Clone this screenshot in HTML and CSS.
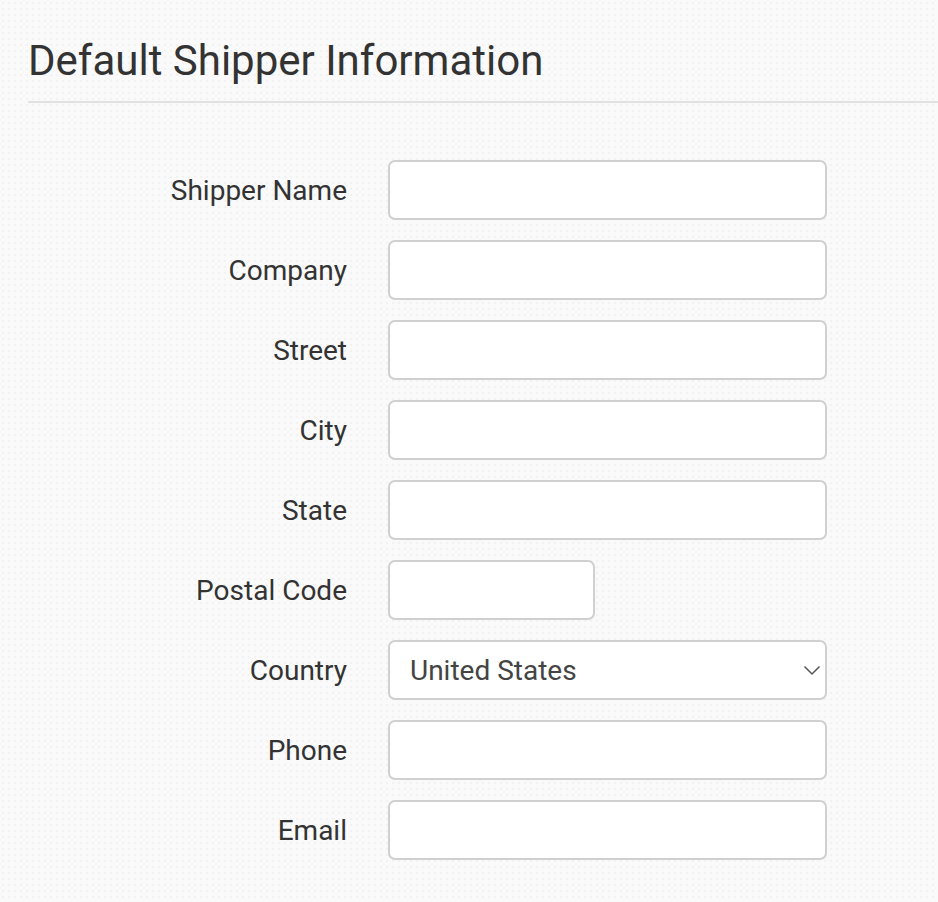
FILE: index.html
```html
<!DOCTYPE html>
<html lang="en">
<head>
<meta charset="utf-8">
<title>Default Shipper Information</title>
<link rel="stylesheet" href="styles.css">
</head>
<body>
<div class="page">
  <h1 class="title">Default Shipper Information</h1>
  <div class="rule"></div>
  <form class="form">
    <label class="label" for="f-name">Shipper Name</label>
    <input class="field" id="f-name" type="text">
    <label class="label" for="f-company">Company</label>
    <input class="field" id="f-company" type="text">
    <label class="label" for="f-street">Street</label>
    <input class="field" id="f-street" type="text">
    <label class="label" for="f-city">City</label>
    <input class="field" id="f-city" type="text">
    <label class="label" for="f-state">State</label>
    <input class="field" id="f-state" type="text">
    <label class="label" for="f-postal">Postal Code</label>
    <input class="field field-short" id="f-postal" type="text">
    <label class="label" for="f-country">Country</label>
    <div class="select-wrap">
      <select class="field select" id="f-country">
        <option>United States</option>
        <option>Canada</option>
        <option>Mexico</option>
      </select>
      <svg class="chevron" width="18" height="11" viewBox="0 0 18 11"><path d="M1.5 1.5 L9 9 L16.5 1.5" fill="none" stroke="#555" stroke-width="1.5"/></svg>
    </div>
    <label class="label" for="f-phone">Phone</label>
    <input class="field" id="f-phone" type="text">
    <label class="label" for="f-email">Email</label>
    <input class="field" id="f-email" type="text">
  </form>
</div>
</body>
</html>
```
FILE: styles.css
```css
html, body {
  margin: 0;
  padding: 0;
}
body {
  width: 938px;
  height: 902px;
  overflow: hidden;
  background-color: #fafafa;
  background-image: radial-gradient(circle at 50% 50%, #f2f2f2 0 1.3px, transparent 1.6px);
  background-size: 6px 6px;
  font-family: Roboto, "Liberation Sans", Arial, sans-serif;
  color: #333;
}
.page {
  padding: 36px 0 0 28px;
}
.title {
  margin: 0;
  font-size: 42px;
  font-weight: 400;
  line-height: 50px;
  color: #333;
}
.rule {
  height: 2px;
  background: #e1e1e1;
  margin-top: 15px;
}
.form {
  display: grid;
  grid-template-columns: 319px 439px;
  column-gap: 41px;
  row-gap: 20px;
  align-items: center;
  margin-top: 57px;
}
.label {
  text-align: right;
  font-size: 28px;
  color: #333;
}
.field {
  box-sizing: border-box;
  height: 60px;
  width: 439px;
  border: 2px solid #d0d0d0;
  border-radius: 7px;
  background: #fff;
  font-family: inherit;
  font-size: 28px;
  color: #444;
  padding: 0 20px;
  margin: 0;
  outline: none;
}
.field-short {
  width: 207px;
}
.select-wrap {
  position: relative;
  width: 439px;
  height: 60px;
}
.select {
  appearance: none;
  -webkit-appearance: none;
  padding-left: 20px;
}
.chevron {
  position: absolute;
  right: 6px;
  top: 25px;
  pointer-events: none;
}
```
